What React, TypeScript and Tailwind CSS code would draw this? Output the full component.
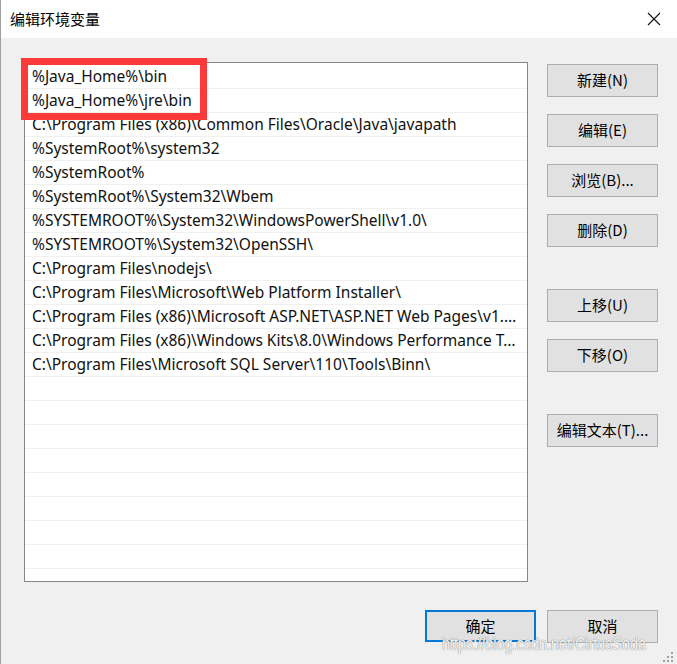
import React from "react";

const paths = [
  "%Java_Home%\\bin",
  "%Java_Home%\\jre\\bin",
  "C:\\Program Files (x86)\\Common Files\\Oracle\\Java\\javapath",
  "%SystemRoot%\\system32",
  "%SystemRoot%",
  "%SystemRoot%\\System32\\Wbem",
  "%SYSTEMROOT%\\System32\\WindowsPowerShell\\v1.0\\",
  "%SYSTEMROOT%\\System32\\OpenSSH\\",
  "C:\\Program Files\\nodejs\\",
  "C:\\Program Files\\Microsoft\\Web Platform Installer\\",
  "C:\\Program Files (x86)\\Microsoft ASP.NET\\ASP.NET Web Pages\\v1.0\\",
  "C:\\Program Files (x86)\\Windows Kits\\8.0\\Windows Performance Toolkit\\",
  "C:\\Program Files\\Microsoft SQL Server\\110\\Tools\\Binn\\",
];

const rows = [...paths, ...Array(9).fill("")];

function Btn({ label, primary = false }: { label: string; primary?: boolean }) {
  return (
    <button
      className={
        primary
          ? "w-[111px] h-[32px] bg-[#e1e1e1] border-2 border-[#0078d7] text-[15px] text-black"
          : "w-[111px] h-[33px] bg-[#e1e1e1] border border-[#adadad] text-[15px] text-black"
      }
    >
      {label}
    </button>
  );
}

export default function App() {
  return (
    <div
      className="relative w-[677px] h-[664px] bg-[#f0f0f0] border-l border-[#a0a0a0] overflow-hidden"
      style={{ fontFamily: '"Noto Sans", "Noto Sans CJK SC", sans-serif' }}
    >
      {/* title bar */}
      <div className="h-[38px] bg-white flex items-center justify-between pl-[9px] pr-[16px]">
        <span className="text-[15px] text-black" style={{ fontFamily: '"Noto Sans CJK SC", sans-serif' }}>
          编辑环境变量
        </span>
        <svg width="14" height="14" viewBox="0 0 14 14">
          <path d="M1 1 L13 13 M13 1 L1 13" stroke="#111" strokeWidth="1.1" />
        </svg>
      </div>

      <div className="flex pt-[24px] pl-[23px]">
        {/* list */}
        <div className="w-[504px] h-[520px] bg-white border border-[#828790] pt-[2px] overflow-hidden">
          {rows.map((p, i) => (
            <div
              key={i}
              className="h-[24px] border-b border-[#f0f0f0] pl-[7px] pr-[9px] text-[15.5px] leading-[23px] text-[#111] truncate"
            >
              {p}
            </div>
          ))}
        </div>

        {/* side buttons */}
        <div className="ml-[19px] mt-[2px] flex flex-col" style={{ fontFamily: '"Noto Sans CJK SC", sans-serif' }}>
          <div className="flex flex-col gap-[17px]">
            <Btn label="新建(N)" />
            <Btn label="编辑(E)" />
            <Btn label="浏览(B)..." />
            <Btn label="删除(D)" />
          </div>
          <div className="flex flex-col gap-[17px] mt-[42px]">
            <Btn label="上移(U)" />
            <Btn label="下移(O)" />
          </div>
          <div className="mt-[42px]">
            <Btn label="编辑文本(T)..." />
          </div>
        </div>
      </div>

      {/* bottom buttons */}
      <div
        className="flex justify-end gap-[11px] pr-[19px] mt-[28px]"
        style={{ fontFamily: '"Noto Sans CJK SC", sans-serif' }}
      >
        <Btn label="确定" primary />
        <Btn label="取消" />
      </div>

      {/* red highlight annotation */}
      <div className="absolute left-[20px] top-[58px] w-[186px] h-[62px] border-[7px] border-[#fc3a3a]" />

      {/* watermark */}
      <div
        className="absolute left-[441px] top-[634px] text-[18px] leading-[20px] text-white/90 whitespace-nowrap origin-left scale-x-[0.8]"
        style={{ fontFamily: '"Liberation Sans", sans-serif', textShadow: "0 0 1px #8a8a8a, 0 0 1px #8a8a8a" }}
      >
        https://blog.csdn.net/CirtusSoda
      </div>

      {/* resize grip */}
      <svg className="absolute right-[3px] bottom-[1px]" width="12" height="12" viewBox="0 0 12 12">
        <rect x="9" y="1" width="2" height="2" fill="#a0a0a0" />
        <rect x="5" y="5" width="2" height="2" fill="#a0a0a0" />
        <rect x="9" y="5" width="2" height="2" fill="#a0a0a0" />
        <rect x="1" y="9" width="2" height="2" fill="#a0a0a0" />
        <rect x="5" y="9" width="2" height="2" fill="#a0a0a0" />
        <rect x="9" y="9" width="2" height="2" fill="#a0a0a0" />
      </svg>
    </div>
  );
}
